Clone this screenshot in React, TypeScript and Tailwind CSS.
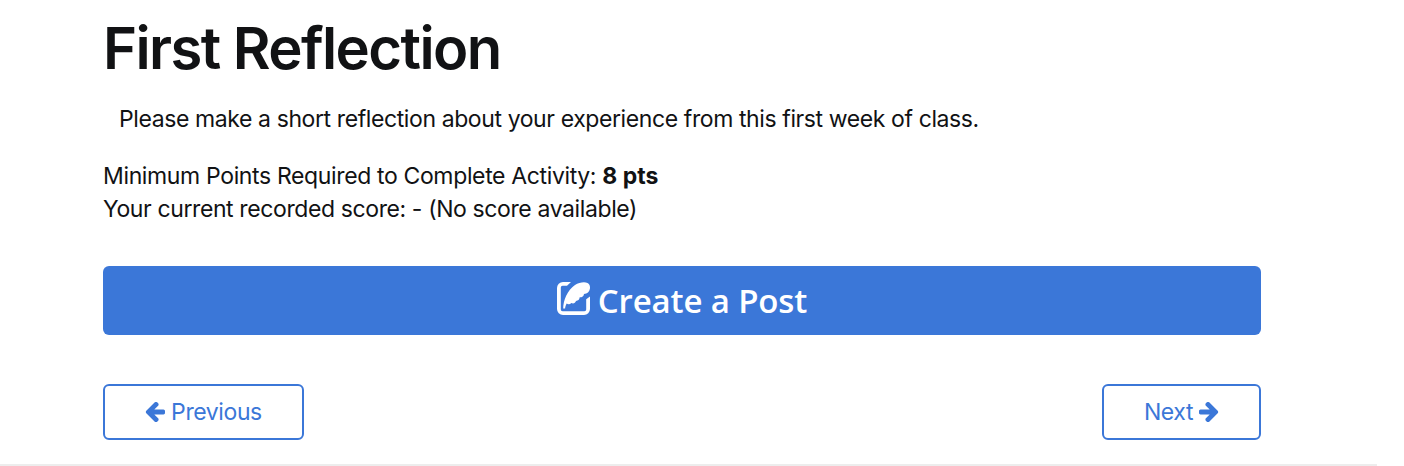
const PostIcon = () => (
  <svg viewBox="0 0 33 33" className="mb-[5px] h-[33px] w-[33px]" fill="currentColor" aria-hidden="true">
    <path d="M14 0H6a6 6 0 0 0-6 6v21a6 6 0 0 0 6 6h21a6 6 0 0 0 6-6V14.5l-3.8 2.8V27.5a1.8 1.8 0 0 1-1.8 1.8H5.6a1.8 1.8 0 0 1-1.8-1.8V5.6a1.8 1.8 0 0 1 1.8-1.8H10Z" />
    <path d="M6.2 26.5C6.2 19 10.2 8 18 3c4-2.6 9.5-3.4 12.5-2 2 .9 2.8 3 2.4 5.7-.4 3.2-2.7 4.9-5.9 5.2-.2 2.3-1.8 3.3-4.3 3.4-.2 2.4-1.6 3.4-3.7 3.7-.8 2.2-2.6 2.9-4.7 2-1.3 1.4-3.2 1.5-4.6.5-1 1.5-1.4 3.2-1.6 5Z" />
  </svg>
);

const ArrowIcon = ({ className = "" }: { className?: string }) => (
  <svg viewBox="0 -64 1536 1536" className={`h-5 w-5 ${className}`} fill="currentColor" aria-hidden="true">
    <path d="M1536 640v128q0 53-32.5 90.5t-84.5 37.5h-704l293 294q38 36 38 90t-38 90l-75 76q-37 37-90 37-52 0-91-37l-651-652q-37-37-37-90 0-52 37-91l651-650q38-38 91-38 52 0 90 38l75 74q38 38 38 91t-38 91l-293 293h704q52 0 84.5 37.5t32.5 90.5z" />
  </svg>
);

const App = () => {
  return (
    <div className="h-[466px] overflow-hidden bg-white font-['Inter',sans-serif] text-[#111214]">
      <main className="h-[466px] w-[1377px] border-b-2 border-[#ededed] pl-[103px] pr-[116px] pt-[12px]">
        <h1 className="h-[72px] whitespace-nowrap text-[58px] font-semibold leading-[72px] tracking-[-1.58px]">
          First Reflection
        </h1>
        <p className="mt-[19px] whitespace-nowrap pl-4 text-[23px] leading-[33px] tracking-[-0.4px]">
          Please make a short reflection about your experience from this first week of class.
        </p>
        <div className="mt-6 whitespace-nowrap text-[23px] leading-[33px]">
          <p className="tracking-[-0.36px]">
            Minimum Points Required to Complete Activity:{" "}
            <strong className="tracking-normal">8 pts</strong>
          </p>
          <p className="tracking-[-0.39px]">Your current recorded score: - (No score available)</p>
        </div>
        <button className="mt-10 flex h-[69px] w-full items-center justify-center gap-2 rounded-[6px] bg-[#3b77d8] font-['Open_Sans',sans-serif] text-[33px] font-[550] tracking-[-0.15px] text-white">
          <PostIcon />
          <span>Create a Post</span>
        </button>
        <div className="mt-[49px] flex justify-between text-[23px] tracking-[-0.4px] text-[#3b77d8]">
          <button className="flex h-[56px] w-[201px] items-center justify-center gap-1.5 rounded-[6px] border-2 border-[#3b77d8]">
            <ArrowIcon />
            <span>Previous</span>
          </button>
          <button className="flex h-[56px] w-[159px] items-center justify-center gap-1.5 rounded-[6px] border-2 border-[#3b77d8]">
            <span>Next</span>
            <ArrowIcon className="rotate-180" />
          </button>
        </div>
      </main>
    </div>
  );
};

export default App;
